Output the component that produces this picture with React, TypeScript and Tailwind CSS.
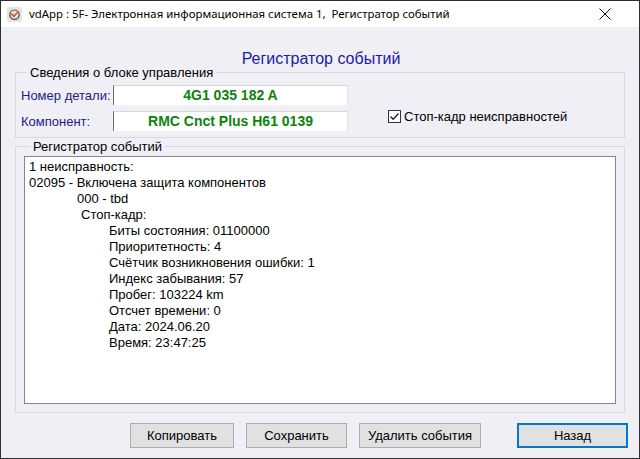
import React from "react";

const lines: { text: string; indent: string }[] = [
  { text: "1 неисправность:", indent: "pl-0" },
  { text: "02095 - Включена защита компонентов", indent: "pl-0" },
  { text: "000 - tbd", indent: "pl-[48px]" },
  { text: "Стоп-кадр:", indent: "pl-[52px]" },
  { text: "Биты состояния: 01100000", indent: "pl-[80px]" },
  { text: "Приоритетность: 4", indent: "pl-[80px]" },
  { text: "Счётчик возникновения ошибки: 1", indent: "pl-[80px]" },
  { text: "Индекс забывания: 57", indent: "pl-[80px]" },
  { text: "Пробег: 103224 km", indent: "pl-[80px]" },
  { text: "Отсчет времени: 0", indent: "pl-[80px]" },
  { text: "Дата: 2024.06.20", indent: "pl-[80px]" },
  { text: "Время: 23:47:25", indent: "pl-[80px]" },
];

function AppIcon() {
  return (
    <svg width="15" height="15" viewBox="0 0 16 16">
      <rect x="0" y="0" width="16" height="16" rx="3" fill="#e4e4e6" />
      <circle cx="8" cy="8.2" r="5" fill="none" stroke="#4a4a4a" strokeWidth="1.3" />
      <path d="M5 7.6 L7.4 10 L11.2 5.6" fill="none" stroke="#e4561f" strokeWidth="1.7" strokeLinecap="round" strokeLinejoin="round" />
    </svg>
  );
}

function Field({ label, value }: { label: string; value: string }) {
  return (
    <div className="flex items-center h-[20px]">
      <span className="w-[92px] text-[#1c1c8c]">{label}</span>
      <div className="w-[235px] h-[20px] bg-white border-t border-l border-r border-t-[#d6d6d6] border-l-[#707070] border-r-[#e2e2e2] flex items-center justify-center font-bold text-[14px] text-[#0c840c]">
        {value}
      </div>
    </div>
  );
}

function Button({ label, w, active }: { label: string; w: string; active?: boolean }) {
  return (
    <button
      className={`${w} h-[25px] bg-[#e1e1e1] text-black text-[13px] ${active ? "border-2 border-[#0078d7]" : "border border-[#adadad]"}`}
    >
      {label}
    </button>
  );
}

export default function App() {
  return (
    <div
      className="w-[640px] h-[459px] flex flex-col border border-[#2e2e2e] bg-[#f0eff5] text-[13px] leading-[13px] text-black overflow-hidden"
      style={{ fontFamily: '"Liberation Sans", Arial, sans-serif' }}
    >
      {/* title bar */}
      <div className="h-[26px] bg-white flex items-center pl-[6px] pr-[28px] shrink-0">
        <AppIcon />
        <span
          className="ml-[7px] text-[11.4px] leading-[16px] text-black whitespace-pre"
          style={{ fontFamily: '"Noto Sans", "Open Sans", sans-serif' }}
        >
          vdApp : 5F- Электронная информационная система 1,  Регистратор событий
        </span>
        <div className="ml-auto">
          <svg width="12" height="12" viewBox="0 0 12 12">
            <path d="M0.5 0.5 L11.5 11.5 M11.5 0.5 L0.5 11.5" stroke="#111" strokeWidth="1" />
          </svg>
        </div>
      </div>

      {/* heading */}
      <div className="mt-[25px] h-[14px] leading-[14px] text-center text-[16px] text-[#1a1ab4] pl-[2px]">
        Регистратор событий
      </div>

      {/* control unit info */}
      <fieldset className="mx-[14px] border border-[#d9d9dd] px-[5px] pt-[6px] pb-[6px]">
        <legend className="ml-[6px] px-[3px] leading-[13px]">Сведения о блоке управления</legend>
        <div className="flex">
          <div className="flex flex-col gap-[6px]">
            <Field label="Номер детали:" value="4G1 035 182 A" />
            <Field label="Компонент:" value="RMC Cnct Plus H61 0139" />
          </div>
          <div className="ml-[40px] pt-[25px] flex items-center h-[38px]">
            <div className="w-[13px] h-[13px] border border-[#333] bg-white flex items-center justify-center">
              <svg width="11" height="11" viewBox="0 0 11 11">
                <path d="M1.5 5.5 L4.2 8.2 L9.5 2.5" fill="none" stroke="#222" strokeWidth="1.3" />
              </svg>
            </div>
            <span className="ml-[3px]">Стоп-кадр неисправностей</span>
          </div>
        </div>
      </fieldset>

      {/* event log */}
      <fieldset className="mt-[2px] mx-[14px] border border-[#d9d9dd] px-[8px] pt-[3px] pb-[8px]">
        <legend className="ml-[6px] px-[3px] leading-[13px]">Регистратор событий</legend>
        <div className="h-[248px] bg-white border border-[#828790] pl-[4px] pt-[2px] leading-[16px]">
          {lines.map((l, i) => (
            <div key={i} className={`${l.indent} whitespace-pre`}>
              {l.text}
            </div>
          ))}
        </div>
      </fieldset>

      {/* buttons */}
      <div className="mt-[10px] flex pl-[129px]">
        <Button label="Копировать" w="w-[104px]" />
        <div className="ml-[12px]">
          <Button label="Сохранить" w="w-[101px]" />
        </div>
        <div className="ml-[12px]">
          <Button label="Удалить события" w="w-[122px]" />
        </div>
        <div className="ml-[36px]">
          <Button label="Назад" w="w-[111px]" active />
        </div>
      </div>
    </div>
  );
}
